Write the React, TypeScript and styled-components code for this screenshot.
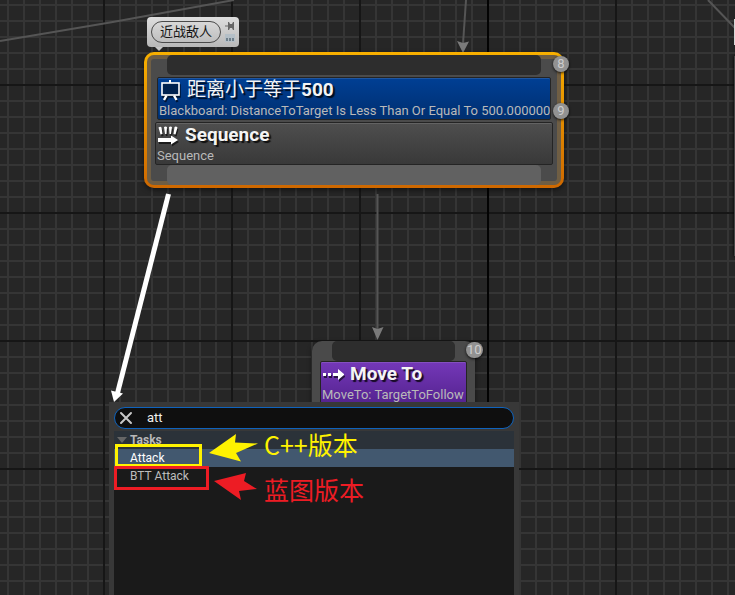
import React, { useState } from "react";
import styled, { createGlobalStyle } from "styled-components";

const GlobalStyle = createGlobalStyle`
  * { box-sizing: border-box; }
  html, body { margin: 0; height: 100%; background: #262626; }
  #root { height: 100%; }
  body, button, input { font-family: Roboto, "Noto Sans CJK SC", sans-serif; }
`;

const Canvas = styled.main`
  position: relative;
  min-height: 100vh;
  overflow: hidden;
  background-color: #262626;
  background-image:
    linear-gradient(90deg, #030303 2px, transparent 2px),
    linear-gradient(90deg, #161616 2px, transparent 2px),
    linear-gradient(#161616 2px, transparent 2px),
    linear-gradient(90deg, #353535 2px, transparent 2px),
    linear-gradient(#353535 2px, transparent 2px);
  background-size: 2000px 2000px, 128px 128px, 128px 128px, 16px 16px, 16px 16px;
  background-position: 487px 0, 103px 84px, 103px 84px, 7px 4px, 7px 4px;
  background-repeat: repeat-y, repeat, repeat, repeat, repeat;
`;

const Wires = styled.svg`
  position: absolute;
  inset: 0;
  width: 100%;
  height: 100%;
  pointer-events: none;
`;

const Node = styled.article<{ $x: number; $y: number; $w: number }>`
  position: absolute;
  left: ${(p) => p.$x}px;
  top: ${(p) => p.$y}px;
  width: ${(p) => p.$w}px;
  display: flex;
  flex-direction: column;
  padding: 0 8px;
  border-radius: 10px;
  color: #b9b9b9;
  box-shadow: 0 2px 5px rgba(0, 0, 0, 0.5);
  background: #4a4a4a;
`;

const SelectedNode = styled(Node)`
  padding: 3px;
  background: linear-gradient(#f8b000, #ce6800);
`;

const FrameBody = styled.div`
  display: flex;
  flex-direction: column;
  border-radius: 7px;
  padding: 0 8px;
  background: #4b4b4b;
  box-shadow: inset 0 0 0 4px rgba(255, 170, 40, 0.2);
`;

const Pin = styled.div<{ $light?: boolean }>`
  height: 20px;
  margin: 0 12px;
  border-radius: 5px;
  background: ${(p) => (p.$light ? "#616161" : "#2d2d2d")};
`;

const tones = {
  blue: "linear-gradient(#003f94, #002f70)",
  gray: "linear-gradient(#4e4e4e, #393939)",
  purple: "linear-gradient(#7438b8, #552390)",
};

const Block = styled.section<{ $tone: keyof typeof tones; $inset?: boolean }>`
  display: flex;
  flex-direction: column;
  height: 43px;
  margin: ${(p) => (p.$inset ? "2px" : "0")};
  padding: 0 1px;
  border: 1px solid #242424;
  border-radius: 2px;
  background: ${(p) => tones[p.$tone]};
  box-shadow: inset 0 1px 0 rgba(255, 255, 255, 0.12);
`;

const TitleRow = styled.div`
  display: flex;
  align-items: center;
  gap: 6px;
  height: 24px;
`;

const Title = styled.h2`
  margin: 0;
  font-size: 19px;
  line-height: 24px;
  font-weight: 700;
  color: #f4f4f4;
  text-shadow: 2px 2px 1px rgba(0, 0, 0, 0.8);
  white-space: nowrap;
`;

const CjkTitle = styled.span`
  font-weight: 400;
`;

const Detail = styled.p`
  margin: 0;
  font-size: 13px;
  line-height: 18px;
  white-space: nowrap;
`;

const Glyph = styled.svg`
  flex: none;
  width: 22px;
  height: 22px;
  filter: drop-shadow(1px 2px 0 rgba(0, 0, 0, 0.6));
`;

const Badge = styled.span<{ $x: number; $y: number }>`
  position: absolute;
  left: ${(p) => p.$x}px;
  top: ${(p) => p.$y}px;
  min-width: 16px;
  height: 16px;
  padding: 0 1px;
  border-radius: 8px;
  background: #929292;
  color: #cdcdcd;
  font-size: 13px;
  line-height: 16px;
  text-align: center;
  box-shadow: 0 1px 3px rgba(0, 0, 0, 0.8);
`;

const Bubble = styled.aside`
  position: absolute;
  left: 147px;
  top: 17px;
  display: flex;
  align-items: center;
  gap: 4px;
  height: 30px;
  padding: 4px;
  border-radius: 4px;
  background: linear-gradient(#dedede, #b8b8b8);
  &::after {
    content: "";
    position: absolute;
    left: 8px;
    top: 30px;
    border: 4px solid transparent;
    border-top-color: #c8c8c8;
  }
`;

const BubbleText = styled.p`
  margin: 0;
  padding: 0 8px;
  border: 1px solid #4a4a4a;
  border-radius: 11px;
  color: #151515;
  font-size: 13px;
  line-height: 20px;
  white-space: nowrap;
`;

const BubbleTools = styled.div`
  display: flex;
  flex-direction: column;
  gap: 2px;
`;

const ToolButton = styled.button`
  display: block;
  width: 10px;
  height: 10px;
  padding: 0;
  border: 0;
  background: none;
  svg { display: block; width: 10px; height: 10px; }
`;

const EdgeBubble = styled.div`
  position: absolute;
  left: 734px;
  top: 19px;
  width: 92px;
  height: 26px;
  background: #d8d8d8;
`;

const EdgeNode = styled.div`
  position: absolute;
  left: 734px;
  top: 56px;
  width: 92px;
  height: 200px;
  background: #464646;
  box-shadow: 0 0 3px #000;
`;

const Menu = styled.div`
  position: absolute;
  left: 109px;
  top: 402px;
  bottom: 0;
  width: 410px;
  display: flex;
  flex-direction: column;
  padding: 5px 5px 0;
  background: #383838;
`;

const Search = styled.form`
  display: flex;
  align-items: center;
  height: 22px;
  padding: 0 4px;
  border: 1px solid #0f63bd;
  border-radius: 11px;
  background: #0f0f0f;
`;

const ClearButton = styled.button`
  width: 14px;
  height: 14px;
  padding: 0;
  border: 0;
  background: none;
  svg { display: block; width: 14px; height: 14px; }
`;

const SearchInput = styled.input`
  flex: 1;
  min-width: 0;
  padding: 0 14px;
  border: 0;
  outline: 0;
  background: transparent;
  color: #f0f0f0;
  font-size: 13px;
  line-height: 20px;
`;

const Results = styled.div`
  flex: 1;
  margin-top: 2px;
  background: #1a1a1a;
`;

const Category = styled.button`
  display: flex;
  align-items: center;
  gap: 3px;
  width: 100%;
  height: 18px;
  padding: 0 3px;
  border: 0;
  background: #2b3239;
  color: #b8b8b8;
  font-size: 12px;
  font-weight: 700;
  svg { width: 10px; height: 10px; }
`;

const Result = styled.button<{ $active?: boolean }>`
  display: block;
  width: 100%;
  height: 18px;
  padding: 0 16px;
  border: 0;
  text-align: left;
  font-size: 12px;
  line-height: 18px;
  background: ${(p) => (p.$active ? "#42586f" : "transparent")};
  color: ${(p) => (p.$active ? "#ffffff" : "#bdbdbd")};
`;

const Mark = styled.div<{ $x: number; $y: number; $w: number; $h: number; $color: string }>`
  position: absolute;
  left: ${(p) => p.$x}px;
  top: ${(p) => p.$y}px;
  width: ${(p) => p.$w}px;
  height: ${(p) => p.$h}px;
  border: 3px solid ${(p) => p.$color};
  pointer-events: none;
`;

const Note = styled.p<{ $x: number; $y: number; $color: string }>`
  position: absolute;
  left: ${(p) => p.$x}px;
  top: ${(p) => p.$y}px;
  margin: 0;
  color: ${(p) => p.$color};
  font-family: "Noto Sans CJK SC", sans-serif;
  font-size: 25px;
  line-height: 30px;
  white-space: nowrap;
`;

const YELLOW = "#fff200";
const RED = "#ed1c24";

const BoardIcon = () => (
  <Glyph viewBox="0 0 22 22" aria-hidden="true">
    <path d="M10 1h2v3h-2z" fill="#fff" />
    <rect x="3" y="4" width="17" height="12" fill="#002250" stroke="#fff" strokeWidth="1.6" />
    <path d="M7.500 16.500l-2.500 4.500M15 16.500l2.500 4.500" stroke="#fff" strokeWidth="2.4" />
  </Glyph>
);

const SequenceIcon = () => (
  <Glyph viewBox="0 0 22 22" aria-hidden="true">
    <path
      d="M1.500 3.500q2-1.500 3 0l1 6.500-2 .5zM7 3q1.500-1 3 0l-.5 7H8zM12 3q1.500-1 3 0l-1 7h-1.500zM17.500 3q1.500-1 3 .5l-2 7-2-.5z"
      fill="#fff"
    />
    <path d="M1 14h13v-2.500l7 4.500-7 4.500V18H1z" fill="#fff" />
  </Glyph>
);

const MoveIcon = () => (
  <Glyph viewBox="0 0 22 22" aria-hidden="true">
    <path d="M1 10h3v3H1zM6 10h3v3H6zM11 10h5V6l6.500 5.500L16 17v-4h-5z" fill="#fff" />
  </Glyph>
);

export default function App() {
  const [query, setQuery] = useState("att");
  return (
    <>
      <GlobalStyle />
      <Canvas>
        <Wires aria-hidden="true">
          <g stroke="#555" strokeWidth="2" fill="none">
            <path d="M0 41L110 22.500L234 0" />
            <path d="M466 0L463 44" />
            <path d="M377.500 194V331" />
            <path d="M708 0L735 28" />
          </g>
          <path d="M457 41l6 2 6-1.500-6 11.500zM372 327l5.500 2 6-2-6 13z" fill="#7a7a7a" />
          <path d="M168.500 194L117 395" stroke="#fff" strokeWidth="5" />
          <path d="M111 390.500l6 1.500 6 1.500-9 8.500z" fill="#fff" />
        </Wires>

        <EdgeNode />
        <EdgeBubble />

        <Bubble>
          <BubbleText>近战敌人</BubbleText>
          <BubbleTools>
            <ToolButton type="button" aria-label="Pin comment">
              <svg viewBox="0 0 10 10">
                <path d="M0 4.500h3V1h1l1 2h2l1-2h1v8H8L7 7H5L4 9H3V5.500H0z" fill="#666" />
              </svg>
            </ToolButton>
            <ToolButton type="button" aria-label="Toggle comment">
              <svg viewBox="0 0 10 10">
                <path d="M0 1h10v8H0z" fill="#b4bfc7" />
                <path d="M1 5h2v3H1zM4 5h2v3H4zM7 5h2v3H7z" fill="#6f7f8a" />
              </svg>
            </ToolButton>
          </BubbleTools>
        </Bubble>

        <SelectedNode $x={144} $y={52} $w={420}>
          <FrameBody>
            <Pin />
            <Block $tone="blue" $inset>
              <TitleRow>
                <BoardIcon />
                <Title><CjkTitle>距离小于等于</CjkTitle>500</Title>
              </TitleRow>
              <Detail>Blackboard: DistanceToTarget Is Less Than Or Equal To 500.000000</Detail>
            </Block>
            <Block $tone="gray">
              <TitleRow>
                <SequenceIcon />
                <Title>Sequence</Title>
              </TitleRow>
              <Detail>Sequence</Detail>
            </Block>
            <Pin $light />
          </FrameBody>
          <Badge $x={409} $y={4}>8</Badge>
          <Badge $x={409} $y={51}>9</Badge>
        </SelectedNode>

        <Node $x={312} $y={341} $w={163}>
          <Pin />
          <Block $tone="purple">
            <TitleRow>
              <MoveIcon />
              <Title>Move To</Title>
            </TitleRow>
            <Detail>MoveTo: TargetToFollow</Detail>
          </Block>
          <Pin />
          <Badge $x={154} $y={1}>10</Badge>
        </Node>

        <Menu>
          <Search onSubmit={(e) => e.preventDefault()}>
            <ClearButton type="button" aria-label="Clear search" onClick={() => setQuery("")}>
              <svg viewBox="0 0 14 14">
                <path d="M2 2l10 10M12 2L2 12" stroke="#c8c8c8" strokeWidth="2" strokeLinecap="round" />
              </svg>
            </ClearButton>
            <SearchInput aria-label="Search" value={query} onChange={(e) => setQuery(e.target.value)} />
          </Search>
          <Results>
            <Category type="button">
              <svg viewBox="0 0 10 10" aria-hidden="true"><path d="M0 2h10L5 8z" fill="#666" /></svg>
              Tasks
            </Category>
            <Result type="button" $active>Attack</Result>
            <Result type="button">BTT Attack</Result>
          </Results>
        </Menu>

        <Mark $x={115} $y={444} $w={87} $h={23} $color={YELLOW} />
        <Mark $x={114} $y={466} $w={95} $h={24} $color={RED} />
        <Wires aria-hidden="true">
          <path d="M209 453L236 434L235 442.500L258 443.500L236 453L241 461.500z" fill={YELLOW} />
          <path d="M214 481L246 473L244 481L257 489L239 491L241 500z" fill={RED} />
        </Wires>
        <Note $x={264} $y={429} $color={YELLOW}>C++版本</Note>
        <Note $x={264} $y={474} $color={RED}>蓝图版本</Note>
      </Canvas>
    </>
  );
}
